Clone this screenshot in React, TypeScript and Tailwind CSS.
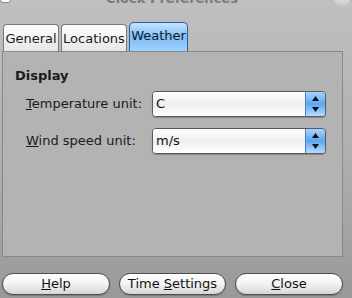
import React from "react";

const font = { fontFamily: '"DejaVu Sans", Verdana, sans-serif' };

function Tab({ label, active = false, w }: { label: string; active?: boolean; w: string }) {
  if (active) {
    return (
      <div
        className={`${w} flex h-[29px] items-center justify-center rounded-t-[5px] border border-b-0 border-[#2a5f9e] bg-gradient-to-b from-[#c6e4ff] via-[#7dbcf6] to-[#9fd2ff] pb-[2px] text-[13px] text-[#0e1a2a]`}
      >
        {label}
      </div>
    );
  }
  return (
    <div
      className={`${w} flex h-[27px] items-center justify-center rounded-t-[4px] border border-b-0 border-[#7a7a7a] bg-gradient-to-b from-[#ffffff] to-[#e6e6e6] pt-[2px] text-[13px] text-[#1a1a1a]`}
    >
      {label}
    </div>
  );
}

function Combo({ value }: { value: string }) {
  return (
    <div className="flex h-[26px] w-[174px] shrink-0 overflow-hidden rounded-[4px] border border-[#5a5a5a] shadow-[0_1px_1px_rgba(0,0,0,0.25)]">
      <div className="flex flex-1 items-center bg-gradient-to-b from-[#ffffff] via-[#eeeeee] to-[#ffffff] pl-[3px] text-[13px] text-[#111]">
        {value}
      </div>
      <div className="flex w-[20px] flex-col items-center justify-between border-l border-[#4a7fc0] bg-gradient-to-b from-[#a9d4ff] via-[#5aa6f2] to-[#b8dcff] py-[4px]">
        <svg width="7" height="5" viewBox="0 0 7 5">
          <path d="M3.5 0L7 5H0z" fill="#111" />
        </svg>
        <svg width="7" height="5" viewBox="0 0 7 5">
          <path d="M0 0h7L3.5 5z" fill="#111" />
        </svg>
      </div>
    </div>
  );
}

function PillButton({ children, w }: { children: React.ReactNode; w: string }) {
  return (
    <div
      className={`${w} flex h-[22px] items-center justify-center rounded-full border border-[#4d4d4d] bg-gradient-to-b from-[#ffffff] via-[#f2f2f2] to-[#d6d6d6] text-[13px] text-[#111] shadow-[0_1px_1px_rgba(0,0,0,0.2)]`}
    >
      {children}
    </div>
  );
}

export default function App() {
  return (
    <div
      style={font}
      className="relative flex h-[298px] w-[352px] flex-col overflow-hidden bg-gradient-to-b from-[#c0c0c0] via-[#b0b0b0] to-[#999999]"
    >
      {/* title bar remnants */}
      <div className="absolute left-0 top-[-8px] h-[11px] w-[11px] rounded-[3px] border border-[#888] bg-white" />
      <div className="absolute right-[2px] top-[-10px] h-[16px] w-[16px] rounded-full bg-gradient-to-b from-[#f4f4f4] to-[#c8c8c8]" />
      <div className="flex h-[22px] justify-center overflow-hidden">
        <span className="-mt-[11px] ml-[-8px] whitespace-nowrap text-[13px] font-bold text-[#7a7a7a]">Clock Preferences</span>
      </div>

      <div className="flex items-end gap-[2px] pl-[3px]">
        <Tab label="General" w="w-[56px]" />
        <Tab label="Locations" w="w-[66px]" />
        <Tab label="Weather" w="w-[59px]" active />
      </div>

      <div className="ml-[2px] flex h-[206px] w-[341px] flex-col border border-[#888] bg-[#b3b3b3] pl-[12px] pt-[16px]">
        <div className="text-[13px] font-bold leading-[16px] text-[#1a1a1a]">Display</div>
        <div className="mt-[7px] flex items-center">
          <div className="w-[137px] shrink-0 whitespace-nowrap pl-[11px] text-[13px] text-[#1a1a1a]">
            <span className="underline">T</span>emperature unit:
          </div>
          <Combo value="C" />
        </div>
        <div className="mt-[11px] flex items-center">
          <div className="w-[137px] shrink-0 whitespace-nowrap pl-[11px] text-[13px] text-[#1a1a1a]">
            <span className="underline">W</span>ind speed unit:
          </div>
          <Combo value="m/s" />
        </div>
      </div>

      <div className="mt-[16px] flex gap-[9px] pl-[2px]">
        <PillButton w="w-[108px]">
          <span className="underline">H</span>elp
        </PillButton>
        <PillButton w="w-[107px]">
          Time&nbsp;<span className="underline">S</span>ettings
        </PillButton>
        <PillButton w="w-[108px]">
          <span className="underline">C</span>lose
        </PillButton>
      </div>
    </div>
  );
}
